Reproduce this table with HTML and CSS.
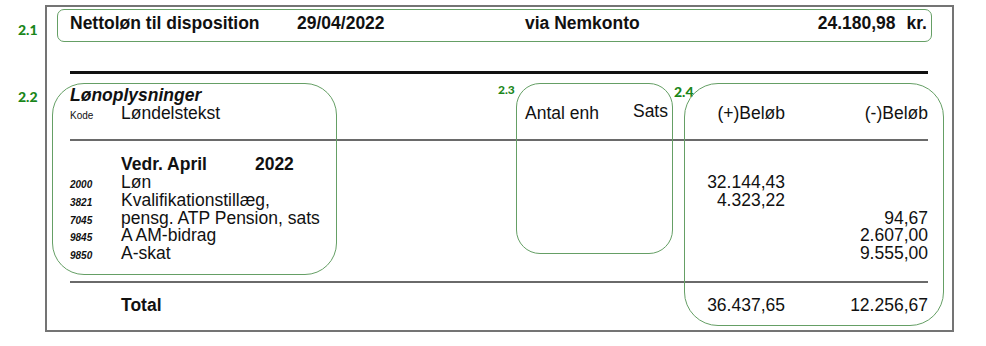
FILE: index.html
```html
<!DOCTYPE html>
<html lang="da">
<head>
<meta charset="utf-8">
<title>Lønseddel</title>
<link rel="stylesheet" href="styles.css">
</head>
<body>
<div class="page">
  <div class="slip">
    <div class="net">
      <span>Nettoløn til disposition</span>
      <span>29/04/2022</span>
      <span>via Nemkonto</span>
      <span class="net-amount">24.180,98<span class="kr">kr.</span></span>
    </div>
    <div class="rule-heavy"></div>

    <div class="grid head">
      <div class="title">Lønoplysninger</div>
      <div class="code plain">Kode</div>
      <div>Løndelstekst</div>
      <div class="antal-sats"><span>Antal enh</span><span class="sats">Sats</span></div>
      <div class="num">(+)Beløb</div>
      <div class="num">(-)Beløb</div>
    </div>
    <div class="rule"></div>

    <div class="grid body">
      <div class="code"></div>
      <div class="bold">Vedr. April<span class="year-gap"></span>2022</div>
      <div></div><div></div><div></div>

      <div class="code">2000</div><div>Løn</div><div></div><div class="num">32.144,43</div><div class="num"></div>
      <div class="code">3821</div><div>Kvalifikationstillæg,</div><div></div><div class="num">4.323,22</div><div class="num"></div>
      <div class="code">7045</div><div>pensg. ATP Pension, sats</div><div></div><div class="num"></div><div class="num">94,67</div>
      <div class="code">9845</div><div>A AM-bidrag</div><div></div><div class="num"></div><div class="num">2.607,00</div>
      <div class="code">9850</div><div>A-skat</div><div></div><div class="num"></div><div class="num">9.555,00</div>
    </div>
    <div class="rule rule-2"></div>

    <div class="grid total">
      <div class="code"></div>
      <div class="bold">Total</div>
      <div></div>
      <div class="num">36.437,65</div>
      <div class="num">12.256,67</div>
    </div>
  </div>

  <div class="marks">
    <span class="tag tag-21">2.1</span>
    <span class="tag tag-22">2.2</span>
    <span class="tag tag-23">2.3</span>
    <span class="tag tag-24">2.4</span>
    <div class="ring ring-22"></div>
    <div class="ring ring-23"></div>
    <div class="ring ring-24"></div>
  </div>
</div>
</body>
</html>
```

FILE: styles.css
```css
html, body {
  margin: 0;
  padding: 0;
  background: #fff;
}

body {
  font-family: "Liberation Sans", Arial, sans-serif;
  color: #111;
  font-size: 17.5px;
  line-height: 17.75px;
}

.page {
  position: relative;
  width: 986px;
  height: 346px;
  padding: 5px 0 0 45px;
  box-sizing: border-box;
}

.slip {
  width: 909px;
  height: 327px;
  box-sizing: border-box;
  border: 2px solid #747474;
}

.net {
  margin: 2px 0 0 10px;
  width: 875px;
  box-sizing: border-box;
  border: 1px solid #659f65;
  border-radius: 7px;
  padding: 5px 4px 8px 12px;
  display: grid;
  grid-template-columns: 227px 228px 1fr auto;
  font-weight: bold;
}

.net-amount {
  text-align: right;
}

.kr {
  margin-left: 11px;
}

.rule-heavy {
  margin: 29px 24px 0 23px;
  height: 3px;
  background: #111;
}

.grid {
  margin: 0 24px 0 23px;
  display: grid;
  grid-template-columns: 51px 404px 143px 117px 143px;
  align-items: baseline;
}

.head {
  margin-top: 13px;
}

.title {
  grid-column: 1 / -1;
  font-weight: bold;
  font-style: italic;
}

.code {
  font-size: 10px;
  line-height: 10px;
  font-weight: bold;
  font-style: italic;
}

.code.plain {
  font-weight: normal;
  font-style: normal;
}

.antal-sats {
  display: flex;
  justify-content: space-between;
  align-items: flex-start;
}

.sats {
  margin-top: -2px;
}

.num {
  text-align: right;
}

.bold {
  font-weight: bold;
}

.year-gap {
  display: inline-block;
  width: 48px;
}

.rule {
  margin: 17px 24px 0 23px;
  height: 2px;
  background: #6a6a6a;
}

.body {
  margin-top: 15px;
}

.rule-2 {
  margin-top: 18px;
}

.total {
  margin-top: 14px;
}

/* annotation overlay */
.tag {
  position: absolute;
  font-family: Lato, "Open Sans", sans-serif;
  font-weight: 900;
  font-size: 14px;
  line-height: 14px;
  color: #1a861a;
}

.tag-21 { left: 18px; top: 23px; }
.tag-22 { left: 18px; top: 90px; }
.tag-23 { left: 498px; top: 83px; font-size: 12px; }
.tag-24 { left: 674px; top: 85px; }

.ring {
  position: absolute;
  border: 1.5px solid #659f65;
  box-sizing: border-box;
}

.ring-22 {
  left: 52px;
  top: 83px;
  width: 285px;
  height: 192px;
  border-radius: 32px;
}

.ring-23 {
  left: 516px;
  top: 83px;
  width: 157px;
  height: 171px;
  border-radius: 24px;
}

.ring-24 {
  left: 684px;
  top: 83px;
  width: 260px;
  height: 243px;
  border-radius: 34px;
}
```
